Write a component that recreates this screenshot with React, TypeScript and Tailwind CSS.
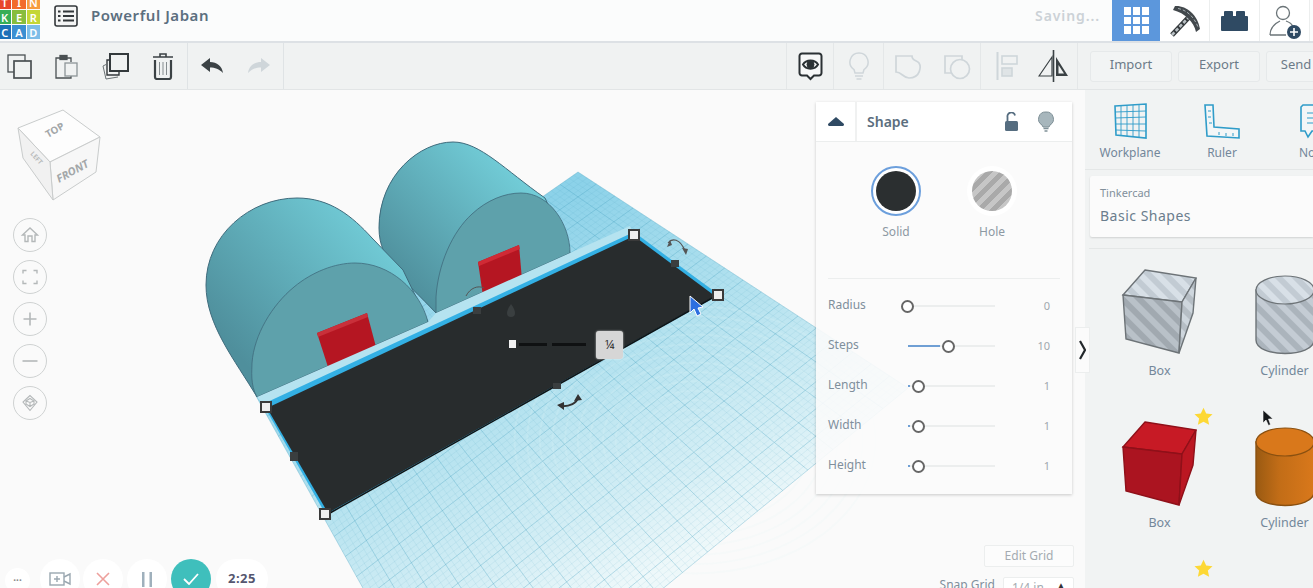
import React from "react";

const font = { fontFamily: '"Noto Sans", "Open Sans", sans-serif' };

type Pt = [number, number];

// corners of the workplane, page coords
const A: Pt = [578, 172];
const B: Pt = [908, 388];
const C: Pt = [457, 757];
const D: Pt = [256, 396];

const lerp = (p: Pt, q: Pt, t: number): Pt => [p[0] + (q[0] - p[0]) * t, p[1] + (q[1] - p[1]) * t];

function gridLines(count: number) {
  const out: { a: Pt; b: Pt; major: boolean }[] = [];
  for (let i = 0; i <= count; i++) {
    const t = i / count;
    const major = i % 4 === 0;
    out.push({ a: lerp(A, B, t), b: lerp(D, C, t), major });
    out.push({ a: lerp(A, D, t), b: lerp(B, C, t), major });
  }
  return out;
}

const ripples = Array.from({ length: 14 }, (_, i) => 14 + i * 11);

function Scene() {
  const lines = gridLines(72);
  return (
    <svg className="absolute inset-0 w-[1085px] h-[498px]" viewBox="0 90 1085 498">
      <defs>
        <linearGradient id="plane" gradientUnits="userSpaceOnUse" x1="590" y1="180" x2="760" y2="520">
          <stop offset="0" stopColor="#8cd2e9" />
          <stop offset="0.45" stopColor="#b4e2ef" />
          <stop offset="0.8" stopColor="#d4eef5" />
          <stop offset="1" stopColor="#eef8fa" />
        </linearGradient>
        <linearGradient id="cyl" gradientUnits="userSpaceOnUse" x1="225" y1="340" x2="370" y2="215">
          <stop offset="0" stopColor="#4f8f9c" />
          <stop offset="1" stopColor="#72cdd8" />
        </linearGradient>
        <linearGradient id="cyl2" gradientUnits="userSpaceOnUse" x1="395" y1="275" x2="510" y2="165">
          <stop offset="0" stopColor="#4f8f9c" />
          <stop offset="1" stopColor="#72cdd8" />
        </linearGradient>
      </defs>
      <polygon points={[A, B, C, D].map((p) => p.join(",")).join(" ")} fill="url(#plane)" />
      {lines.map((l, i) => (
        <line
          key={i}
          x1={l.a[0]}
          y1={l.a[1]}
          x2={l.b[0]}
          y2={l.b[1]}
          stroke="#4da6c4"
          strokeWidth={l.major ? 0.7 : 0.3}
          opacity={l.major ? 0.5 : 0.35}
        />
      ))}
      {ripples.map((r) => (
        <ellipse key={r} cx="695" cy="440" rx={r * 1.15} ry={r * 0.85} fill="none" stroke="#e6f6fa" strokeWidth="2" opacity="0.16" />
      ))}

      {/* right half cylinder */}
      <path d="M436 313 C405 280 379 262 379 228 C379 175 420 142 453 142 C480 142 505 170 545 198 L570 253 L436 313 Z" fill="url(#cyl2)" stroke="#3f6b7c" strokeWidth="1" />
      <path d="M436 313 L436 297 C438 265 452 232 472 214 C487 200 505 193 521 193 C550 193 570 225 570 253 Z" fill="#5ea1ab" stroke="#3f6b7c" strokeWidth="0.8" />
      <polygon points="478,262 519,245 522,280 483,296" fill="#b51622" />
      <polygon points="478,262 519,245 520,249 479,266" fill="#d02a35" />

      {/* left half cylinder */}
      <path d="M257 397 C235 360 206 325 206 285 C206 235 250 198 297 198 C330 198 352 216 372 238 L403 270 L428 322 L257 397 Z" fill="url(#cyl)" stroke="#3f6b7c" strokeWidth="1" />
      <path d="M257 397 C250 385 252 370 252 363 C254 335 272 305 294 287 C312 272 335 263 355 263 C390 263 420 290 428 322 Z" fill="#5ea1ab" stroke="#3f6b7c" strokeWidth="0.8" />
      <polygon points="317,333 367,313 376,347 328,367" fill="#b51622" />
      <polygon points="317,333 367,313 368,317 318,337" fill="#c9303a" />

      {/* pale strip between shapes and plate */}
      <polygon points="257,397 428,322 436,313 570,253 630,226 634,235 264,405" fill="#b5e3f0" />

      {/* selected plate */}
      <polygon points="263,404 634,232 719,295 326,515" fill="#33b0e4" />
      <polygon points="267,408 634,236 715,296 328,513" fill="#282c2d" />
      <path d="M330 513 L714 297" stroke="#101314" strokeWidth="1.5" />

      {/* ruler dashes + handles */}
      <rect x="519" y="343" width="28" height="3" fill="#0f1112" />
      <rect x="552" y="343" width="34" height="3" fill="#0f1112" />
      {([[266, 407], [634, 235], [718, 295], [325, 514]] as Pt[]).map((p) => (
        <rect key={p[0]} x={p[0] - 5} y={p[1] - 5} width="10" height="10" fill="#eeeeee" stroke="#3a3a3a" strokeWidth="2" />
      ))}
      <rect x="509" y="340" width="7" height="8" fill="#f2f2f2" />
      <rect x="290" y="452" width="8" height="9" fill="#3a3e3f" />
      <rect x="553" y="383" width="8" height="6" fill="#3a3e3f" />
      <rect x="473" y="307" width="8" height="7" fill="#3a3e3f" />
      <rect x="671" y="260" width="8" height="7" fill="#3a3e3f" />
      <path d="M511 304 C514 308 515 311 515 313 A4 4 0 0 1 507 313 C507 311 508 308 511 304 Z" fill="#3a3f40" />

      {/* rotate arrows */}
      <path d="M560 406 C570 407 577 403 578 397" fill="none" stroke="#333" strokeWidth="2" />
      <path d="M557 405 L564 402 L564 410 Z M578 394 L574 401 L582 400 Z" fill="#333" />
      <path d="M668 243 C672 238 680 238 685 251" fill="none" stroke="#555" strokeWidth="1.2" />
      <path d="M667 247 L670 240 L672 245 Z M686 255 L682 248 L688 249 Z" fill="#555" />
      <path d="M466 296 C470 288 478 285 484 288" fill="none" stroke="#555" strokeWidth="1" />

      {/* mouse pointer */}
      <path d="M690 296 L690 313 L694 309 L697 316 L701 314 L698 308 L703 307 Z" fill="#2c6fe0" stroke="#fff" strokeWidth="1" />
    </svg>
  );
}

function ViewCube() {
  return (
    <svg className="absolute left-[15px] top-[18px] w-[88px] h-[94px]" viewBox="15 108 88 94">
      <polygon points="63,110 100,137 50,162 18,128" fill="#fdfdfd" stroke="#c9cccc" strokeWidth="1" />
      <polygon points="50,162 100,137 96,172 53,200" fill="#f7f7f7" stroke="#c9cccc" strokeWidth="1" />
      <polygon points="18,128 50,162 53,200 23,158" fill="#f1f1f1" stroke="#c9cccc" strokeWidth="1" />
      <text x="0" y="0" transform="translate(48 138) rotate(-30)" fontSize="10" fontWeight="700" fill="#a3a7a9" style={font}>TOP</text>
      <text x="0" y="0" transform="translate(59 183) rotate(-29)" fontSize="11" fontWeight="700" fontStyle="italic" fill="#a3a7a9" style={font}>FRONT</text>
      <text x="0" y="0" transform="translate(30 154) rotate(48) " fontSize="6.5" fontWeight="700" fill="#b8bbbc" style={font}>LEFT</text>
    </svg>
  );
}

function RoundBtn({ children }: { children: React.ReactNode }) {
  return (
    <div className="w-[34px] h-[34px] rounded-full border border-[#cfd2d2] flex items-center justify-center">
      <svg className="w-5 h-5" viewBox="0 0 20 20" fill="none" stroke="#b4b8b9" strokeWidth="1.4">
        {children}
      </svg>
    </div>
  );
}

function ViewControls() {
  return (
    <div className="absolute left-[13px] top-[128px] flex flex-col gap-2">
      <RoundBtn>
        <path d="M2.5 10 L10 3 L17.5 10 L15 10 L15 16.5 L12 16.5 L12 11 L8 11 L8 16.5 L5 16.5 L5 10 Z" />
      </RoundBtn>
      <RoundBtn>
        <path d="M3 6.5 V3.5 H6.5 M13.5 3.5 H17 V6.5 M17 13.5 V16.5 H13.5 M6.5 16.5 H3 V13.5" />
      </RoundBtn>
      <RoundBtn>
        <path d="M10 3.5 V16.5 M3.5 10 H16.5" strokeWidth="1.6" />
      </RoundBtn>
      <RoundBtn>
        <path d="M2.5 10 H17.5" strokeWidth="1.6" />
      </RoundBtn>
      <RoundBtn>
        <path d="M10 2.5 L3 9 L10 17.5 L17 9 Z M6 8 L10 5.5 L14 8 L14 11 L10 13.5 L6 11 Z M10 9.5 V13.5 M6 8 L10 9.5 L14 8" strokeWidth="1.1" />
      </RoundBtn>
    </div>
  );
}

function BottomControls() {
  const pill = "rounded-full bg-white flex items-center justify-center";
  return (
    <div className="absolute left-[5px] top-[469px] flex items-center gap-[3px]">
      <div className={`${pill} w-[25px] h-[25px] mr-[7px] mt-[2px] text-[#888] text-[10px] font-bold leading-none`}>
        <span className="-mt-[6px]">...</span>
      </div>
      <div className={`${pill} w-[40px] h-[40px]`}>
        <svg className="w-[22px] h-[14px]" viewBox="0 0 22 14" fill="none" stroke="#9aa7b0" strokeWidth="1.4">
          <rect x="1" y="1" width="14" height="12" />
          <path d="M15 5 L21 2 V12 L15 9 M8 4 V10 M5 7 H11" />
        </svg>
      </div>
      <div className={`${pill} w-[40px] h-[40px]`}>
        <svg className="w-[14px] h-[14px]" viewBox="0 0 14 14" fill="none" stroke="#eda09c" strokeWidth="1.6">
          <path d="M1 1 L13 13 M13 1 L1 13" />
        </svg>
      </div>
      <div className={`${pill} w-[40px] h-[40px] ml-[1px]`}>
        <svg className="w-[12px] h-[15px]" viewBox="0 0 12 15" fill="#9fb0bc">
          <rect x="1" y="0" width="2.5" height="15" />
          <rect x="8.5" y="0" width="2.5" height="15" />
        </svg>
      </div>
      <div className={`${pill} w-[40px] h-[40px] ml-[1px] !bg-[#3fbfbc]`}>
        <svg className="w-[16px] h-[12px]" viewBox="0 0 16 12" fill="none" stroke="#fff" strokeWidth="1.8">
          <path d="M1 6 L6 11 L15 1" />
        </svg>
      </div>
      <div className={`${pill} w-[52px] h-[40px] ml-[2px] text-[13px] font-bold tracking-[0.5px] text-[#55566f]`}>2:25</div>
    </div>
  );
}

function SliderRow({ label, value, pos, fill }: { label: string; value: string; pos: number; fill: number }) {
  return (
    <div className="h-10 flex items-center relative">
      <span className="w-[80px] text-[12px] text-[#7f8f9c] -mt-[3px]">{label}</span>
      <div className="relative w-[87px] h-[2px] bg-[#eceeee]">
        <div className="absolute left-0 top-0 h-[2px] bg-[#6f9fd4]" style={{ width: fill }} />
        <div
          className="absolute -top-[5.5px] w-[13px] h-[13px] rounded-full border-2 border-[#666] bg-white"
          style={{ left: pos - 6 }}
        />
      </div>
      <span className="ml-auto pr-[22px] text-[11px] text-[#a0a8ae]">{value}</span>
    </div>
  );
}

function ShapePanel() {
  return (
    <div className="absolute left-[816px] top-[12px] w-[256px] h-[392px] bg-[#fbfbfb]/90 shadow-[0_1px_3px_rgba(0,0,0,0.2)]">
      <div className="h-10 bg-white flex items-center border-b border-[#eceeee]">
        <div className="w-[41px] h-full border-r-2 border-[#f0f1f1] flex items-center justify-center">
          <svg className="w-4 h-[9px]" viewBox="0 0 16 9" fill="#2f4a63">
            <path d="M8 0 L16 7 C16 8 15.5 9 15 9 H1 C.5 9 0 8 0 7 Z" />
          </svg>
        </div>
        <span className="ml-[10px] text-[14px] font-semibold text-[#5b6e7e]">Shape</span>
        <svg className="ml-auto w-[15px] h-[20px]" viewBox="0 0 15 20" fill="none">
          <path d="M3.5 9 V5 A3.8 3.8 0 0 1 11 3.5" stroke="#566d80" strokeWidth="1.8" />
          <rect x="1" y="9" width="13" height="10" rx="1.5" fill="#566d80" />
        </svg>
        <svg className="ml-[19px] mr-[18px] w-[16px] h-[21px]" viewBox="0 0 16 21">
          <path d="M8 1 A7 7 0 0 1 12 14 L11 16 H5 L4 14 A7 7 0 0 1 8 1 Z" fill="#a7b6bc" stroke="#7f9097" strokeWidth="1" />
          <path d="M5.5 17.5 H10.5 M6.5 20 H9.5" stroke="#7f9097" strokeWidth="1.4" />
        </svg>
      </div>
      <div className="flex pt-[24px] pl-[55px] gap-[46px]">
        <div className="w-[50px] flex flex-col items-center">
          <div className="w-[50px] h-[50px] rounded-full border-2 border-[#6c9fdc] bg-white flex items-center justify-center">
            <div className="w-10 h-10 rounded-full bg-[#2b2f30]" />
          </div>
          <span className="mt-[7px] text-[12px] text-[#8d99a3]">Solid</span>
        </div>
        <div className="w-[50px] flex flex-col items-center">
          <div className="w-[50px] h-[50px] rounded-full bg-white flex items-center justify-center">
            <div className="w-10 h-10 rounded-full bg-[repeating-linear-gradient(135deg,#a9a9a9_0,#a9a9a9_5px,#c6c6c6_5px,#c6c6c6_10px)]" />
          </div>
          <span className="mt-[7px] text-[12px] text-[#8d99a3]">Hole</span>
        </div>
      </div>
      <div className="mx-3 mt-[37px] border-t border-[#eceeee]" />
      <div className="pl-3 pt-[7px]">
        <SliderRow label="Radius" value="0" pos={-1} fill={0} />
        <SliderRow label="Steps" value="10" pos={40} fill={32} />
        <SliderRow label="Length" value="1" pos={10} fill={2} />
        <SliderRow label="Width" value="1" pos={10} fill={2} />
        <SliderRow label="Height" value="1" pos={10} fill={2} />
      </div>
    </div>
  );
}

function GridControls() {
  return (
    <div className="absolute right-[11px] top-[455px] flex flex-col items-end gap-[10px]">
      <div className="w-[90px] h-[22px] bg-[#fcfcfc] border border-[#eceeee] rounded-[2px] flex items-center justify-center text-[12px] text-[#a4abb1]">
        Edit Grid
      </div>
      <div className="flex items-start">
        <span className="text-[12px] leading-4 text-[#7f8f9c] mr-[8px]">Snap Grid</span>
        <div className="w-[71px] h-[24px] bg-white border border-[#eceeee] rounded-[2px] flex items-start pt-[1px] pl-[8px] text-[12px] text-[#a4abb1]">
          1/4 in
          <span className="ml-auto mr-[8px] text-[8px] text-[#333]">▲</span>
        </div>
      </div>
    </div>
  );
}

function Logo() {
  const tiles = [
    ["T", "#e8462c"], ["I", "#f26a2c"], ["N", "#f79c3e"],
    ["K", "#37ae57"], ["E", "#87bd3d"], ["R", "#c4d636"],
    ["C", "#1c70b8"], ["A", "#3b8fd2"], ["D", "#7dbde8"],
  ];
  return (
    <div className="w-[40px] h-[39px] overflow-hidden shrink-0 flex items-end justify-end">
      <div className="grid grid-cols-3 gap-[1px] w-[42px] shrink-0">
        {tiles.map(([t, c]) => (
          <div key={t} className="h-[14px] flex items-center justify-center text-white text-[11px] font-semibold leading-none" style={{ background: c }}>
            {t}
          </div>
        ))}
      </div>
    </div>
  );
}

function HeaderTile({ children, active }: { children: React.ReactNode; active?: boolean }) {
  return (
    <div className={`w-[50px] h-full flex items-center justify-center border-r border-[#eceeee] ${active ? "!w-[48px] bg-[#5c97dc] border-r-0" : "bg-white"}`}>
      {children}
    </div>
  );
}

function Header() {
  return (
    <div className="h-[43px] shrink-0 bg-[#fbfcfc] border-b-2 border-[#dde1e5] flex items-start">
      <Logo />
      <svg className="ml-[14px] mt-[5px] w-[24px] h-[22px]" viewBox="0 0 24 22" fill="none" stroke="#33383b">
        <rect x="1" y="1" width="22" height="20" rx="2" strokeWidth="1.6" fill="#f4f5f5" />
        <path d="M9 6.5 H20 M9 11 H20 M9 15.5 H20" strokeWidth="2" />
        <path d="M4 6.5 H6.5 M4 11 H6.5 M4 15.5 H6.5" strokeWidth="2" />
      </svg>
      <span className="ml-[13px] mt-[4px] text-[15px] font-semibold text-[#5c6f7f] tracking-[0.55px]">Powerful Jaban</span>
      <span className="ml-auto mt-[5px] mr-[12px] text-[14px] font-semibold text-[#ccd2d7] tracking-[0.9px]">Saving...</span>
      <div className="h-full flex mr-[3px]">
        <HeaderTile active>
          <div className="grid grid-cols-3 gap-[2px] w-[25px]">
            {Array.from({ length: 9 }).map((_, i) => (
              <div key={i} className="h-[7.5px] bg-white" />
            ))}
          </div>
        </HeaderTile>
        <HeaderTile>
          <svg className="w-[32px] h-[32px]" viewBox="0 0 32 32" fill="none">
            <path d="M3 30 L20 12" stroke="#33383b" strokeWidth="5" />
            <path d="M3 30 L20 12" stroke="#b9c0c4" strokeWidth="2.6" strokeDasharray="3.5 2" />
            <path d="M6 1 C16 0 29 9 31 24 L27 27 C25 17 16 8 4 5 Z" fill="#42484c" />
            <path d="M9 3.5 C18 5 25 12 29 22" stroke="#a8b0b4" strokeWidth="1" strokeDasharray="3 2" />
          </svg>
        </HeaderTile>
        <HeaderTile>
          <svg className="w-[27px] h-[20px]" viewBox="0 0 27 20" fill="#2f4a63">
            <rect x="0" y="5" width="27" height="15" rx="1" />
            <rect x="3" y="0" width="9" height="6" rx="1" />
            <rect x="15" y="0" width="9" height="6" rx="1" />
          </svg>
        </HeaderTile>
        <HeaderTile>
          <svg className="w-[33px] h-[36px]" viewBox="0 0 33 36" fill="none">
            <circle cx="15" cy="10" r="6.5" stroke="#6b7478" strokeWidth="1.3" />
            <path d="M2 32 C2 24 8 20 12 18 M18 18 C21 19 24 21 25 24 M2 32 H18" stroke="#6b7478" strokeWidth="1.3" />
            <circle cx="26" cy="29" r="7" fill="#2f4a63" />
            <path d="M26 25 V33 M22 29 H30" stroke="#fff" strokeWidth="1.6" />
          </svg>
        </HeaderTile>
      </div>
    </div>
  );
}

function Toolbar() {
  const dark = "#3b4245";
  const off = "#cfd6da";
  return (
    <div className="h-[47px] shrink-0 bg-[#f0f2f2] border-b border-[#e2e5e6] flex">
      <div className="w-[188px] shrink-0 border-r border-[#dfe3e5] flex items-center pl-[7px]">
        <svg className="w-[25px] h-[25px]" viewBox="0 0 25 25" fill="none" stroke="#4a5053" strokeWidth="1.3">
          <rect x="1" y="1" width="17" height="17" />
          <rect x="7" y="7" width="17" height="17" fill="#f0f2f2" strokeWidth="1.7" />
        </svg>
        <svg className="ml-[23px] w-[23px] h-[25px]" viewBox="0 0 23 25" fill="none" stroke="#4a5053" strokeWidth="1.3">
          <path d="M5 4 H1 V24 H16 V20 M12 4 H16 V8" />
          <rect x="5" y="1.5" width="7" height="4" fill="#4a5053" />
          <rect x="10" y="9" width="12" height="13" fill="#f0f2f2" stroke="#8d9497" />
        </svg>
        <svg className="ml-[24px] w-[27px] h-[27px]" viewBox="0 0 27 27" fill="none" stroke="#33393c">
          <rect x="8" y="1" width="18" height="17" strokeWidth="2" />
          <path d="M8 7 H5 V22 L17 22 V18" strokeWidth="1.4" />
          <path d="M5 11 L1 13 L4 26 L16 24" strokeWidth="1" stroke="#6b7275" />
        </svg>
        <svg className="ml-[23px] w-[22px] h-[28px]" viewBox="0 0 22 28" fill="none" stroke={dark}>
          <path d="M1 5 H21 M8 5 V2 H14 V5" strokeWidth="1.6" />
          <path d="M3 8 V25 A2 2 0 0 0 5 27 H17 A2 2 0 0 0 19 25 V8" strokeWidth="2.2" />
          <path d="M7.5 10 V23 M11 10 V23 M14.5 10 V23" strokeWidth="1" stroke="#858c8f" />
        </svg>
      </div>
      <div className="w-[96px] shrink-0 border-r border-[#dfe3e5] flex items-center pl-[13px]">
        <svg className="w-[22px] h-[16px]" viewBox="0 0 22 16" fill={dark}>
          <path d="M0 7 L9 0 V4 C16 4 21 8 22 15 C18 11 14 9.5 9 9.5 V14 Z" />
        </svg>
        <svg className="ml-[25px] w-[22px] h-[16px]" viewBox="0 0 22 16" fill={off}>
          <path d="M22 7 L13 0 V4 C6 4 1 8 0 15 C4 11 8 9.5 13 9.5 V14 Z" />
        </svg>
      </div>
      <div className="w-[502px] shrink-0" />
      <div className="w-[48px] shrink-0 border-x border-[#e4e7e8] flex items-center justify-center">
        <svg className="w-[25px] h-[29px]" viewBox="0 0 25 29" fill="none" stroke="#2b3134">
          <path d="M4 1.5 H21 A2.5 2.5 0 0 1 23.5 4 V21 A2.5 2.5 0 0 1 21 23.5 H16 L12.5 27 L9 23.5 H4 A2.5 2.5 0 0 1 1.5 21 V4 A2.5 2.5 0 0 1 4 1.5 Z" strokeWidth="2" fill="#f7f8f8" />
          <path d="M5 12.5 C8 7 17 7 20 12.5 C17 18 8 18 5 12.5 Z" strokeWidth="2" />
          <circle cx="12.5" cy="12.5" r="3.5" fill="#2b3134" />
        </svg>
      </div>
      <div className="w-[50px] shrink-0 border-r border-[#e4e7e8] flex items-center justify-center">
        <svg className="w-[20px] h-[29px]" viewBox="0 0 20 29" fill="none" stroke={off} strokeWidth="1.5">
          <path d="M10 1 A9 9 0 0 1 15 17.5 L14 21 H6 L5 17.5 A9 9 0 0 1 10 1 Z" />
          <path d="M6 24 H14 M7.5 27 H12.5" />
        </svg>
      </div>
      <div className="w-[97px] shrink-0 border-r border-[#e4e7e8] flex items-center pl-[11px]">
        <svg className="w-[27px] h-[27px]" viewBox="0 0 27 27" fill="none" stroke={off} strokeWidth="1.7">
          <path d="M1 3 H17 C17 8 22 7 24 10 C26 13 26 25 14 25 C8 25 7 19 1 19 Z" />
        </svg>
        <svg className="ml-[22px] w-[27px] h-[27px]" viewBox="0 0 27 27" fill="none" stroke={off} strokeWidth="1.7">
          <path d="M8 20 H1 V3 H18 V7" />
          <circle cx="16" cy="16" r="9.5" />
        </svg>
      </div>
      <div className="w-[97px] shrink-0 border-r border-[#e4e7e8] flex items-center pl-[15px]">
        <svg className="w-[22px] h-[28px]" viewBox="0 0 22 28" fill="none" stroke={off}>
          <path d="M1.5 0 V28" strokeWidth="2" />
          <rect x="6" y="4" width="15" height="8" strokeWidth="1.6" />
          <rect x="6" y="16" width="10" height="8" strokeWidth="1.6" fill="#dfe4e6" />
        </svg>
        <svg className="ml-[20px] w-[31px] h-[32px]" viewBox="0 0 31 32" fill="none" stroke="#3b4245">
          <path d="M14 7 L1 26 H14 Z" strokeWidth="1.2" />
          <path d="M15.5 0 V32" strokeWidth="1.6" />
          <path d="M18 7 L30 26 H18 Z M20.5 15 V23.5 H26 Z" fill="#3b4245" fillRule="evenodd" stroke="none" />
        </svg>
      </div>
      <div className="shrink-0 flex items-center gap-[6px] pl-[12px]">
        {["Import", "Export", "Send"].map((b) => (
          <div key={b} className="w-[82px] h-[31px] shrink-0 rounded-[3px] border border-[#e6e9ea] bg-[#f2f4f4] flex items-center justify-center text-[13px] text-[#6c7b88]">
            <span className={b === "Send" ? "-ml-[22px] -mt-[2px]" : "-mt-[2px]"}>{b}</span>
          </div>
        ))}
      </div>
    </div>
  );
}

function HoleBox({ solid }: { solid?: boolean }) {
  return (
    <svg className="w-[82px] h-[92px]" viewBox="0 0 82 92">
      <defs>
        <pattern id="stripeTop" width="12" height="12" patternUnits="userSpaceOnUse" patternTransform="rotate(-45)">
          <rect width="12" height="12" fill="#d8e0e7" />
          <rect width="6" height="12" fill="#c2cbd3" />
        </pattern>
        <pattern id="stripeFront" width="12" height="12" patternUnits="userSpaceOnUse" patternTransform="rotate(-45)">
          <rect width="12" height="12" fill="#b9c1c8" />
          <rect width="6" height="12" fill="#a1a9b0" />
        </pattern>
        <pattern id="stripeSide" width="12" height="12" patternUnits="userSpaceOnUse" patternTransform="rotate(-45)">
          <rect width="12" height="12" fill="#ced6dd" />
          <rect width="6" height="12" fill="#b6bec5" />
        </pattern>
      </defs>
      <polygon points="26,4 77,12 63,36 4,29" fill={solid ? "#c71a25" : "url(#stripeTop)"} stroke={solid ? "#8f1019" : "#6d7377"} strokeWidth="1.4" />
      <polygon points="4,29 63,36 60,87 7,73" fill={solid ? "#ab1420" : "url(#stripeFront)"} stroke={solid ? "#8f1019" : "#6d7377"} strokeWidth="1.4" />
      <polygon points="63,36 77,12 74,47 60,87" fill={solid ? "#bb1722" : "url(#stripeSide)"} stroke={solid ? "#8f1019" : "#6d7377"} strokeWidth="1.4" />
    </svg>
  );
}

function HoleCyl({ solid }: { solid?: boolean }) {
  return (
    <svg className="w-[62px] h-[84px]" viewBox="0 0 62 84">
      <defs>
        <pattern id="cylTop" width="12" height="12" patternUnits="userSpaceOnUse" patternTransform="rotate(-45)">
          <rect width="12" height="12" fill="#d8e0e7" />
          <rect width="6" height="12" fill="#c2cbd3" />
        </pattern>
        <pattern id="cylBody" width="12" height="12" patternUnits="userSpaceOnUse" patternTransform="rotate(-45)">
          <rect width="12" height="12" fill="#c4ccd4" />
          <rect width="6" height="12" fill="#abb4bc" />
        </pattern>
        <linearGradient id="orange">
          <stop offset="0" stopColor="#9a5a12" />
          <stop offset="0.4" stopColor="#c26d17" />
          <stop offset="1" stopColor="#d9781b" />
        </linearGradient>
      </defs>
      <path d="M2 16 V66 C2 84 60 84 60 66 V16 Z" fill={solid ? "url(#orange)" : "url(#cylBody)"} stroke={solid ? "#8a5010" : "#6d7377"} strokeWidth="1.4" />
      <ellipse cx="31" cy="16" rx="29" ry="14" fill={solid ? "#d9781b" : "url(#cylTop)"} stroke={solid ? "#8a5010" : "#6d7377"} strokeWidth="1.2" />
    </svg>
  );
}

function Star() {
  return (
    <svg className="absolute w-[19px] h-[19px]" viewBox="0 0 24 24" fill="#fdd835" style={{ left: 97, top: -3 }}>
      <path d="M12 1 L15.4 8.3 L23.4 9.2 L17.5 14.6 L19.1 22.5 L12 18.5 L4.9 22.5 L6.5 14.6 L.6 9.2 L8.6 8.3 Z" />
    </svg>
  );
}

function ShapeCell({ label, children, star }: { label: string; children: React.ReactNode; star?: boolean }) {
  return (
    <div className="relative w-[125px] h-[152px] shrink-0 flex flex-col items-center">
      {star && <Star />}
      <div className="h-[100px] flex items-end justify-center">{children}</div>
      <span className="mt-[4px] text-[12.5px] text-[#73879a]">{label}</span>
    </div>
  );
}

function Sidebar() {
  return (
    <div className="relative w-[228px] shrink-0 bg-[#f1f3f3] overflow-hidden">
      <div className="h-[80px] ml-[-1px] flex border-b border-[#e4e7e7]">
        <div className="w-[92px] shrink-0 flex flex-col items-center pt-[13px]">
          <svg className="w-[35px] h-[36px]" viewBox="0 0 35 36" fill="none" stroke="#2f9cc9">
            <path d="M2 3 L33 1 L33 35 L3 32 Z" strokeWidth="1.6" />
            <path d="M8 3 V32 M14 3 V33 M20 2 V34 M26 2 V34 M2 9 L33 8 M2 15 L33 14 M2 21 L33 21 M3 27 L33 28" strokeWidth="0.9" />
          </svg>
          <span className="mt-[5px] text-[12px] text-[#73879a]">Workplane</span>
        </div>
        <div className="w-[92px] shrink-0 flex flex-col items-center pt-[13px]">
          <svg className="w-[36px] h-[36px]" viewBox="0 0 36 36" fill="#f3f6f7" stroke="#2f9cc9" strokeWidth="1.6">
            <path d="M1 2 H9 L10 24 L35 26 L35 35 L3 33 Z" />
            <path d="M4 8 H7 M4 14 H7 M5 20 H8 M15 29 V32 M22 30 V33 M29 30 V33" strokeWidth="1" />
          </svg>
          <span className="mt-[5px] text-[12px] text-[#73879a]">Ruler</span>
        </div>
        <div className="w-[92px] shrink-0 flex flex-col pl-[31px] pt-[13px]">
          <svg className="w-[30px] h-[36px] shrink-0" viewBox="0 0 30 36" fill="#f3f6f7" stroke="#2f9cc9" strokeWidth="1.6">
            <path d="M4 2 H30 V28 H13 L9 34 L6 28 H2 V4 Z" />
            <path d="M8 10 H24 M8 15 H24 M8 20 H24" strokeWidth="1.2" />
          </svg>
          <span className="mt-[5px] text-[12px] text-[#73879a]">Notes</span>
        </div>
      </div>
      <div className="ml-[5px] mt-[6px] h-[61px] bg-[#fbfbfb] rounded-l-[2px] shadow-[0_1px_2px_rgba(0,0,0,0.14)] pl-[10px] pt-[10px]">
        <div className="text-[11px] leading-[14px] text-[#82909b]">Tinkercad</div>
        <div className="mt-[7px] text-[14px] leading-[18px] tracking-[0.5px] text-[#6a7d8d]">Basic Shapes</div>
      </div>
      <div className="ml-[4px] mt-[11px] border-t border-[#e4e7e7]" />
      <div className="pl-[12px] pt-[9px]">
        <div className="flex">
          <ShapeCell label="Box"><HoleBox /></ShapeCell>
          <ShapeCell label="Cylinder"><HoleCyl /></ShapeCell>
        </div>
        <div className="flex">
          <ShapeCell label="Box" star><HoleBox solid /></ShapeCell>
          <ShapeCell label="Cylinder"><HoleCyl solid /></ShapeCell>
        </div>
        <div className="flex">
          <ShapeCell label="" star>
            <div />
          </ShapeCell>
        </div>
      </div>
      {/* mouse pointer over the shapes */}
      <svg className="absolute left-[177px] top-[319px] w-[12px] h-[18px]" viewBox="0 0 12 18" fill="#15181a" stroke="#fff" strokeWidth="0.6">
        <path d="M1 1 V14 L4 11 L6.5 16.5 L8.5 15.5 L6.5 10 H11 Z" />
      </svg>
    </div>
  );
}

export default function App() {
  return (
    <div className="w-[1313px] h-[588px] overflow-hidden flex flex-col bg-[#fafafa]" style={font}>
      <Header />
      <Toolbar />
      <div className="flex-1 flex min-h-0">
        <div className="relative w-[1085px] shrink-0 bg-[#fafafa]">
          <Scene />
          <ViewCube />
          <ViewControls />
          <BottomControls />
          <ShapePanel />
          <GridControls />
          {/* dimension badge */}
          <div className="absolute left-[596px] top-[241px] w-[27px] h-[28px] rounded-[3px] bg-[#d6d6d6] shadow-[0_0_2px_rgba(255,255,255,0.8)] flex items-center justify-center text-[13px] text-[#333]">
            ¼
          </div>
          <div className="absolute left-[1075px] top-[237px] z-10 w-[15px] h-[46px] bg-[#fbfbfb] border border-[#eceeee] flex items-center justify-center">
            <svg className="w-[7px] h-[20px]" viewBox="0 0 7 20" fill="none" stroke="#23282b" strokeWidth="2.2">
              <path d="M1 1 L6 10 L1 19" />
            </svg>
          </div>
        </div>
        <Sidebar />
      </div>
    </div>
  );
}
